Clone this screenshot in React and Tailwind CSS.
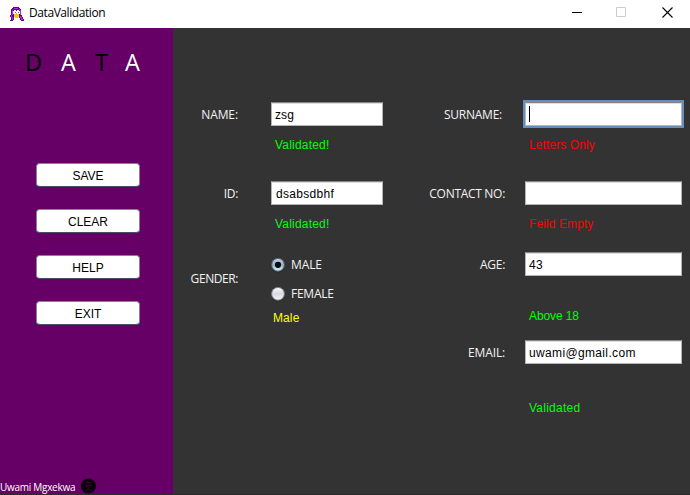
import React from "react";

const UI = "font-['Open_Sans','Noto_Sans',sans-serif]";
const ARIAL = "font-['Liberation_Sans',Arial,sans-serif]";

function PenguinIcon() {
  return (
    <svg width="14" height="14" viewBox="0 0 14 14" shapeRendering="crispEdges">
      <path fill="#5c0a85" d="M3 0h6v1h1v1h1v6h1v2h1v2h1v2h-3v-1h-1v-2H9v-1H4v3H3v1H0v-1h1v-3H0V8h1V2h1V1h1z" />
      <path fill="#c31df0" d="M4 1h4v1H4zM2 3h1v5H2zM10 3h1v5h-1zM9 2h1v1H9zM10 9h1v1h1v2h1v1h-2v-2h-1zM1 8h1v2H1zM2 10h1v3H2z" />
      <path fill="#fff" d="M4 3h2v1h1V3h2v1h1v3H8v1H4V7H3V4h1z" />
      <path fill="#7c5a8d" d="M5 5h1v1H5zM8 5h1v1H8z" />
      <path fill="#f4c90c" d="M6 6h1v1h2v3H8v1H5v-1H4V7h2z" />
    </svg>
  );
}

function TitleBar() {
  return (
    <header className="flex h-7 shrink-0 items-center bg-white pl-[10px]">
      <PenguinIcon />
      <h1 className={`${UI} ml-[5px] -mt-[2px] grow text-[12px] leading-4 tracking-[-0.42px] text-black`}>DataValidation</h1>
      <div className="flex items-center gap-[35px] pr-[17px]">
        <svg width="10" height="10" viewBox="0 0 10 10" className="-mt-1 -mr-px ml-px -translate-x-px">
          <path d="M0 5.5h10" stroke="#000" />
        </svg>
        <svg width="10" height="10" viewBox="0 0 10 10" className="-mt-1 -translate-x-px">
          <path d="M.5.5h9v9h-9z" fill="none" stroke="#ccc" />
        </svg>
        <svg width="11" height="11" viewBox="0 0 11 11" className="-mt-1">
          <path d="M.5.5l10 10M10.5.5l-10 10" stroke="#000" strokeWidth="1.1" />
        </svg>
      </div>
    </header>
  );
}

function SideButton({ children }) {
  return (
    <button className={`${ARIAL} h-6 w-[104px] rounded-[4px] border border-[#8c7f96] border-b-[#47505c] bg-white pt-[2px] text-[12px] leading-5 text-black`}>
      {children}
    </button>
  );
}

function Sidebar() {
  return (
    <aside className="flex w-[173px] flex-col bg-[#660066]">
      <div className={`${UI} mt-[18px] flex h-8 pl-[25px] text-[23.5px] leading-8`}>
        <span className="w-[36px] text-black">D</span>
        <span className="w-[34px] text-white">A</span>
        <span className="w-[30px] text-black">T</span>
        <span className="text-white">A</span>
      </div>
      <nav className="mt-[85px] flex grow flex-col gap-[22px] pl-[36px]">
        <SideButton>SAVE</SideButton>
        <SideButton>CLEAR</SideButton>
        <SideButton>HELP</SideButton>
        <SideButton>EXIT</SideButton>
      </nav>
      <footer className="flex h-[17px] items-center">
        <span className={`${UI} mt-[3px] w-[80px] whitespace-nowrap text-[10px] leading-3 tracking-[-0.28px] text-white`}>Uwami Mgxekwa</span>
        <svg width="17" height="16" viewBox="0 0 17 16">
          <circle cx="8.5" cy="8" r="7.6" fill="#0c000c" />
          <path d="M5.5 4.5q3-2 6 0v4q-3 4-6 0z" fill="#35052f" />
          <path d="M5.5 6h6M6.5 9h4" stroke="#0a000a" strokeWidth="1.3" />
          <path d="M4.5 13q4-3 8 0" stroke="#35052f" fill="none" />
        </svg>
      </footer>
    </aside>
  );
}

function Label({ children, className = "" }) {
  return (
    <span className={`${UI} whitespace-nowrap text-right text-[12px] leading-4 text-[#f2f2f2] ${className}`}>{children}</span>
  );
}

function TextField({ value = "", focused = false, className = "" }) {
  return (
    <div
      className={`${ARIAL} flex h-6 items-center border border-[#b5b5b5] border-t-[#858585] bg-white pl-[3px] text-[12px] leading-4 text-black shadow-[inset_0_1px_0_#dedede] ${focused ? "outline-2 outline-[#648ebf]" : "pt-[2px]"} ${className}`}
    >
      {focused ? <span className="h-4 w-px bg-black" /> : value}
    </div>
  );
}

function Status({ children, className = "" }) {
  return <p className={`${ARIAL} h-4 whitespace-nowrap text-[12px] leading-4 ${className}`}>{children}</p>;
}

function Radio({ checked = false, label, tracking }) {
  return (
    <div className="flex h-4 items-center">
      <svg width="14" height="16" viewBox="0 0 14 16" className="-mt-px">
        <defs>
          <linearGradient id={`face-${label}`} x1="0" y1="0" x2="0" y2="1">
            <stop offset="0" stopColor={checked ? "#c3d7e6" : "#fbfbfc"} />
            <stop offset=".5" stopColor={checked ? "#93aec5" : "#d7d9e0"} />
            <stop offset="1" stopColor={checked ? "#e6f6fd" : "#f5f6f9"} />
          </linearGradient>
        </defs>
        <circle cx="7" cy="8.7" r="6.8" fill="#222528" />
        <circle cx="7" cy="7.8" r="6.4" fill={`url(#face-${label})`} stroke={checked ? "#4c6478" : "#7d8087"} strokeWidth="1" />
        {checked && <circle cx="7" cy="7.8" r="3.1" fill="#080b0d" />}
      </svg>
      <Label className={`ml-[6px] ${tracking}`}>{label}</Label>
    </div>
  );
}

function LeftForm() {
  return (
    <section className="w-[210px] pt-[74px]">
      <div className="flex items-center">
        <Label className="mr-[33px] w-[65px] pt-[2px] tracking-[-0.1px]">NAME:</Label>
        <TextField value="zsg" className="w-[112px] tracking-[0.1px]" />
      </div>
      <Status className="mt-[11px] pl-[102px] tracking-[0.2px] text-[#00ff00]">Validated!</Status>
      <div className="mt-[28px] flex items-center">
        <Label className="mr-[33px] w-[65px] pt-[2px] tracking-[-0.3px]">ID:</Label>
        <TextField value="dsabsdbhf" className="w-[112px] pl-[4px] tracking-[0.3px]" />
      </div>
      <Status className="mt-[11px] pl-[102px] tracking-[0.2px] text-[#00ff00]">Validated!</Status>
      <div className="mt-[25px] flex items-center">
        <Label className="mr-[33px] w-[65px] pb-[2px] tracking-[-0.42px]">GENDER:</Label>
        <div className="flex flex-col gap-[13px]">
          <Radio checked label="MALE" tracking="tracking-[-0.1px]" />
          <Radio label="FEMALE" tracking="tracking-[-0.25px]" />
        </div>
      </div>
      <Status className="mt-[8px] pl-[100px] tracking-[0.1px] text-[#ffff00]">Male</Status>
    </section>
  );
}

function RightForm() {
  return (
    <section className="w-[299px] pt-[74px]">
      <div className="flex items-center">
        <Label className="mr-[23px] w-[119px] pt-[2px] tracking-[-0.25px]">SURNAME:</Label>
        <TextField focused className="w-[157px]" />
      </div>
      <Status className="mt-[11px] pl-[146px] tracking-[0.1px] text-[#ff0000]">Letters Only</Status>
      <div className="mt-[28px] flex items-center">
        <Label className="mr-[20px] w-[122px] pt-[2px] tracking-[-0.3px]">CONTACT NO:</Label>
        <TextField className="w-[157px]" />
      </div>
      <Status className="mt-[11px] pl-[146px] tracking-[0.1px] text-[#ff0000]">Feild Empty</Status>
      <div className="mt-[20px] flex items-center">
        <Label className="mr-[20px] w-[122px] pt-[2px] tracking-[-0.3px]">AGE:</Label>
        <TextField value="43" className="w-[157px] tracking-[0.3px]" />
      </div>
      <Status className="mt-[32px] pl-[146px] tracking-[-0.1px] text-[#00ff00]">Above 18</Status>
      <div className="mt-[16px] flex items-center">
        <Label className="mr-[20px] w-[122px] pt-[2px] tracking-[-0.15px]">EMAIL:</Label>
        <TextField value="uwami@gmail.com" className="w-[157px] tracking-[0.35px]" />
      </div>
      <Status className="mt-[36px] pl-[146px] tracking-[0.25px] text-[#00ff00]">Validated</Status>
    </section>
  );
}

export default function App() {
  return (
    <div className="flex h-[495px] w-[690px] flex-col overflow-hidden border-b border-[#2b2b2b] bg-[#333333]">
      <TitleBar />
      <main className="flex grow">
        <Sidebar />
        <LeftForm />
        <RightForm />
      </main>
    </div>
  );
}
